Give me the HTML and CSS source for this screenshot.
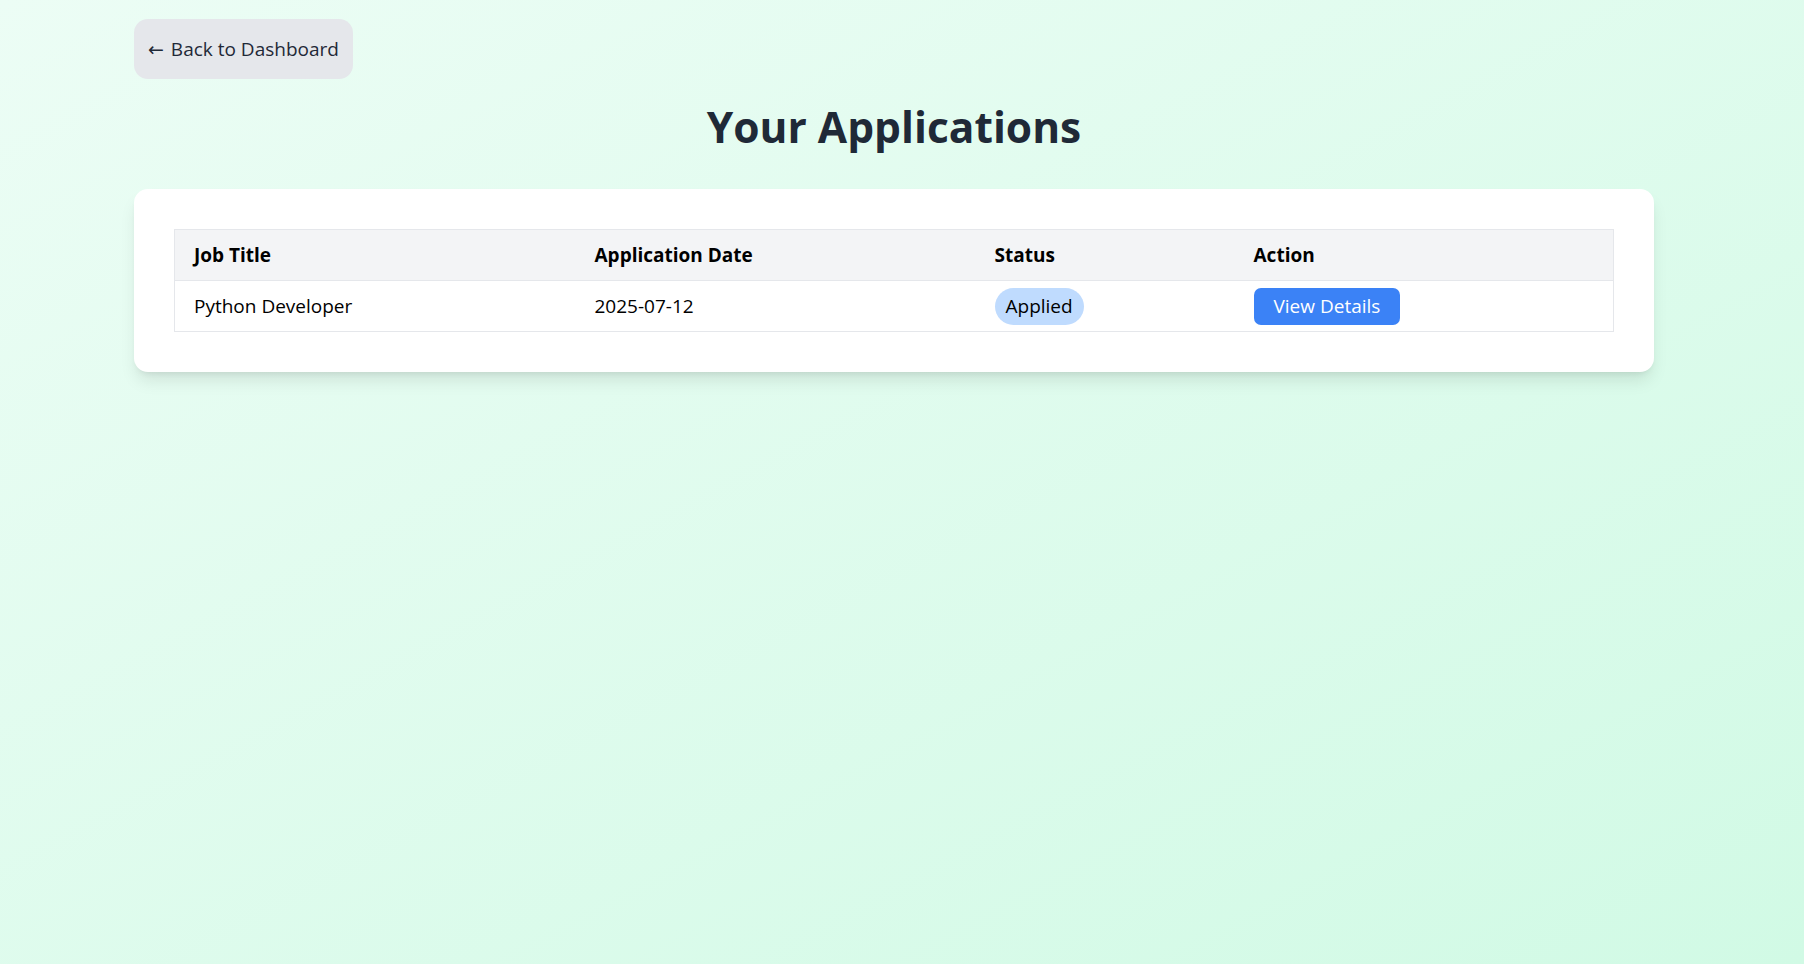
FILE: index.html
```html
<!DOCTYPE html>
<html lang="en">
<head>
<meta charset="utf-8">
<title>Your Applications</title>
<link rel="stylesheet" href="styles.css">
</head>
<body>
<div class="page">
  <a class="back" href="#"><span class="arrow">←</span> Back to Dashboard</a>
  <h1 class="title">Your Applications</h1>
  <div class="card">
    <table class="apps">
      <colgroup>
        <col class="c1"><col class="c2"><col class="c3"><col class="c4">
      </colgroup>
      <thead>
        <tr><th>Job Title</th><th>Application Date</th><th>Status</th><th>Action</th></tr>
      </thead>
      <tbody>
        <tr>
          <td>Python Developer</td>
          <td>2025-07-12</td>
          <td><span class="pill">Applied</span></td>
          <td><a class="view" href="#">View Details</a></td>
        </tr>
      </tbody>
    </table>
  </div>
</div>
</body>
</html>
```
FILE: styles.css
```css
html {
  min-height: 100%;
  background: linear-gradient(to bottom right, #ecfdf5, #d1fae5);
}
body {
  margin: 0;
  min-height: 100vh;
  font-family: "Open Sans", "Noto Sans", sans-serif;
  font-size: 19px;
  color: #000;
}
.page {
  width: 1520px;
  margin-left: 134px;
  padding-top: 19px;
}
.back {
  display: inline-block;
  height: 60px;
  box-sizing: border-box;
  padding: 14px 14px 14px 14px;
  line-height: 32px;
  background: #e5e7eb;
  border-radius: 14px;
  color: #1f2937;
  text-decoration: none;
}
.arrow {
  font-family: "DejaVu Sans", sans-serif;
  font-size: 19px;
  line-height: 1;
  margin-right: 2px;
}
.title {
  margin: 25px 0 39px;
  text-align: center;
  font-size: 42.5px;
  line-height: 46px;
  font-weight: 700;
  color: #1f2937;
}
.card {
  background: #fff;
  border-radius: 14px;
  padding: 40px;
  box-shadow: 0 11px 17px -3px rgba(0, 0, 0, 0.1), 0 4px 7px -4px rgba(0, 0, 0, 0.1);
}
.apps {
  width: 100%;
  border-collapse: collapse;
  border: 1px solid #e5e7eb;
  table-layout: fixed;
}
.c1 { width: 401px; }
.c2 { width: 400px; }
.c3 { width: 259px; }
.apps th,
.apps td {
  height: 50px;
  padding: 0 19px;
  text-align: left;
  vertical-align: middle;
  line-height: 32px;
  border-bottom: 1px solid #e5e7eb;
}
.apps th {
  background: #f3f4f6;
  font-weight: 700;
}
.pill {
  display: inline-block;
  line-height: 37px;
  padding: 0 11px;
  background: #bfdbfe;
  border-radius: 999px;
  vertical-align: middle;
}
.view {
  display: inline-block;
  line-height: 37px;
  padding: 0 20px;
  background: #3b82f6;
  color: #fff;
  border-radius: 7px;
  text-decoration: none;
  vertical-align: middle;
}
```
